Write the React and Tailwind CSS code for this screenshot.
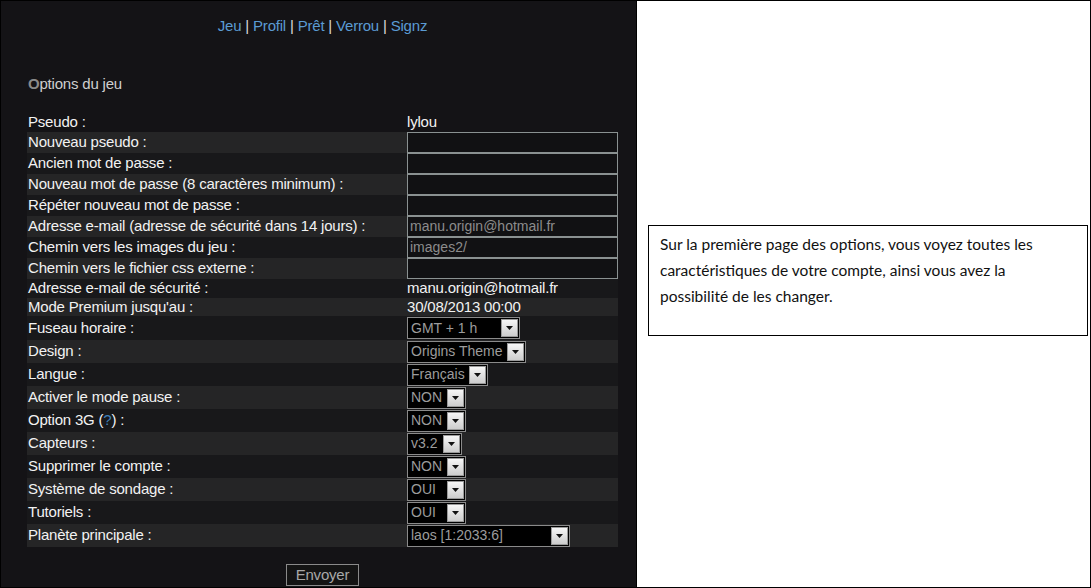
import React from 'react';

const rows = [
  { label: 'Pseudo :', type: 'text', value: 'lylou', h: 'h-[19px]' },
  { label: 'Nouveau pseudo :', type: 'input', value: '' },
  { label: 'Ancien mot de passe :', type: 'input', value: '' },
  { label: 'Nouveau mot de passe (8 caractères minimum) :', type: 'input', value: '' },
  { label: 'Répéter nouveau mot de passe :', type: 'input', value: '' },
  { label: 'Adresse e-mail (adresse de sécurité dans 14 jours) :', type: 'input', value: 'manu.origin@hotmail.fr' },
  { label: 'Chemin vers les images du jeu :', type: 'input', value: 'images2/' },
  { label: 'Chemin vers le fichier css externe :', type: 'input', value: '' },
  { label: 'Adresse e-mail de sécurité :', type: 'text', value: 'manu.origin@hotmail.fr', h: 'h-[19px]' },
  { label: "Mode Premium jusqu'au :", type: 'text', value: '30/08/2013 00:00', h: 'h-[18px]' },
  { label: 'Fuseau horaire :', type: 'select', value: 'GMT + 1 h', w: 'w-[113px]', h: 'h-[24px]' },
  { label: 'Design :', type: 'select', value: 'Origins Theme', w: 'w-[119px]' },
  { label: 'Langue :', type: 'select', value: 'Français', w: 'w-[81px]' },
  { label: 'Activer le mode pause :', type: 'select', value: 'NON', w: 'w-[59px]' },
  { label: 'Option 3G', help: true, type: 'select', value: 'NON', w: 'w-[59px]' },
  { label: 'Capteurs :', type: 'select', value: 'v3.2', w: 'w-[55px]' },
  { label: 'Supprimer le compte :', type: 'select', value: 'NON', w: 'w-[59px]' },
  { label: 'Système de sondage :', type: 'select', value: 'OUI', w: 'w-[59px]' },
  { label: 'Tutoriels :', type: 'select', value: 'OUI', w: 'w-[59px]' },
  { label: 'Planète principale :', type: 'select', value: 'laos [1:2033:6]', w: 'w-[163px]' },
];

const Arrow = () => (
  <div className="w-[17px] h-[18px] mr-[1px] flex items-center justify-center border border-[#9a9a9a] bg-gradient-to-b from-[#f6f6f6] to-[#cdcdcd]">
    <svg width="7" height="4" viewBox="0 0 7 4">
      <path d="M0 0h7L3.5 4z" fill="#111" />
    </svg>
  </div>
);

const Value = ({ row }) => {
  if (row.type === 'input') {
    return (
      <div className="w-[211px] h-[21px] border border-[#8a9191] bg-[#111113] px-[2px] text-[14px] leading-[19px] text-[#8c8c8c]">
        {row.value}
      </div>
    );
  }
  if (row.type === 'select') {
    return (
      <div className={`${row.w} h-[22px] border border-[#8a8a8a] bg-black flex items-center justify-between`}>
        <span className="pl-[3px] text-[14px] text-[#9c9c9c] whitespace-nowrap">{row.value}</span>
        <Arrow />
      </div>
    );
  }
  return <span className="text-[15px] tracking-[-0.2px] text-[#f2f2f2]">{row.value}</span>;
};

const App = () => {
  return (
    <div className="w-[1091px] h-[588px] border border-black flex overflow-hidden font-['Liberation_Sans',Arial,sans-serif]">
      <div className="w-[635px] h-full bg-[#141316] flex flex-col">
        <div className="pt-[14px] pl-[8px] text-center text-[15px] tracking-[-0.2px] text-[#dcdcdc]">
          <span className="text-[#5b9bd3]">Jeu</span> | <span className="text-[#5b9bd3]">Profil</span> |{' '}
          <span className="text-[#5b9bd3]">Prêt</span> | <span className="text-[#5b9bd3]">Verrou</span> |{' '}
          <span className="text-[#5b9bd3]">Signz</span>
        </div>

        <div className="mt-[35px] pl-[27px] text-[15px] tracking-[-0.2px] text-[#cfcfcf]">
          <span className="text-[#8a8a8a] font-bold">O</span>ptions du jeu
        </div>

        <div className="mt-[18px] ml-[26px] w-[591px] flex flex-col">
          {rows.map((row, idx) => {
            const h = row.h || (row.type === 'input' ? 'h-[21px]' : 'h-[23px]');
            const bg = idx % 2 === 1 ? 'bg-[#252526]' : 'bg-[#18181a]';
            return (
              <div key={idx} className={`${h} ${idx === 0 ? 'bg-transparent' : bg} flex items-center`}>
                <div className="w-[380px] pl-[1px] text-[15px] tracking-[-0.2px] text-[#f2f2f2] whitespace-nowrap">
                  {row.label}
                  {row.help && (
                    <>
                      {' '}(<span className="text-[#3f7fb8]">?</span>) :
                    </>
                  )}
                </div>
                <Value row={row} />
              </div>
            );
          })}
        </div>

        <div className="mt-[17px] flex justify-center">
          <div className="ml-[8px] w-[73px] h-[22px] border border-[#8a8a8a] bg-[#141414] text-center text-[15px] tracking-[-0.2px] leading-[20px] text-[#a8a8a8]">
            Envoyer
          </div>
        </div>
      </div>

      <div className="flex-1 h-full bg-white border-l border-black pt-[224px] pl-[11px]">
        <div className="w-[440px] h-[111px] border border-black pt-[5px] pl-[11px] pr-[14px] font-['Lato',sans-serif] text-[15.5px] leading-[26px] text-[#111]">
          Sur la première page des options, vous voyez toutes les caractéristiques de votre compte, ainsi vous avez la
          possibilité de les changer.
        </div>
      </div>
    </div>
  );
};

export default App;
